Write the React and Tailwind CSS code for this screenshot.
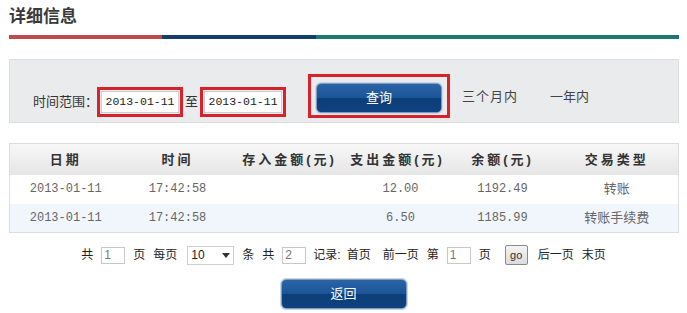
import React from 'react';

const font = { fontFamily: '"Liberation Sans", "Noto Sans CJK SC", sans-serif' };

const rows = [
  { date: '2013-01-11', time: '17:42:58', inAmt: '', outAmt: '12.00', balance: '1192.49', type: '转账' },
  { date: '2013-01-11', time: '17:42:58', inAmt: '', outAmt: '6.50', balance: '1185.99', type: '转账手续费' },
];

const BlueButton = ({ children, className = '' }) => (
  <button
    className={`h-[30px] w-[126px] rounded-[5px] border border-[#7f9cc2] bg-[linear-gradient(#2a64a6_0%,#1c5596_50%,#0c3d78_52%,#0f4280_100%)] text-[13px] text-white shadow-[0_0_0_1px_#c9d6e6] ${className}`}
  >
    {children}
  </button>
);

const DateBox = ({ value }) => (
  <div className="border-[3px] border-[#d9202b] p-[1px]">
    <div className="h-[22px] w-[78px] whitespace-nowrap border border-[#cfcfcf] bg-white text-center text-[11.5px] leading-[20px] text-[#222] font-['Liberation_Mono',monospace]">
      {value}
    </div>
  </div>
);

const SmallInput = ({ value, w = 'w-[24px]' }) => (
  <div className={`h-[17px] ${w} border border-[#c8c8c8] bg-white pl-[2px] text-[12px] leading-[15px] text-[#777]`}>{value}</div>
);

export default function App() {
  return (
    <div className="h-[313px] w-[687px] overflow-hidden bg-white px-[9px] pt-[6px] text-[#333]" style={font}>
      <h1 className="h-[22px] text-[17px] font-bold leading-[22px] text-[#3a3a3a]">详细信息</h1>
      <div className="mt-[7px] flex h-[4px] w-[670px]">
        <div className="w-[153px] bg-[#bf4a4d]" />
        <div className="w-[154px] bg-[#133f6b]" />
        <div className="flex-1 bg-[#1d7774]" />
      </div>

      <div className="mt-[20px] flex h-[64px] w-[670px] items-end border border-[#dcdcdc] bg-[#e9ebec] pb-[4px]">
        <div className="flex items-center pb-[1px]">
          <span className="ml-[23px] text-[13px] text-[#333]">时间范围：</span>
          <div className="ml-[-1px]"><DateBox value="2013-01-11" /></div>
          <span className="mx-[2px] text-[13px]">至</span>
          <DateBox value="2013-01-11" />
        </div>
        <div className="ml-[22px] border-[3px] border-[#d9202b] px-[5px] pt-[6px] pb-[2px]">
          <BlueButton>查询</BlueButton>
        </div>
        <span className="mb-[12px] ml-[12px] text-[13px] tracking-[1px] text-[#444]">三个月内</span>
        <span className="mb-[12px] ml-[32px] text-[13px] text-[#444]">一年内</span>
      </div>

      <table className="mt-[20px] w-[670px] border border-[#dcdcdc] text-center text-[12px]">
        <thead>
          <tr className="h-[31px] bg-[linear-gradient(#f7f7f7,#e6e6e6)] text-[13px] font-bold tracking-[3px] text-[#333]">
            <th className="w-[112px] font-bold">日期</th>
            <th className="w-[112px] font-bold">时间</th>
            <th className="w-[112px] font-bold">存入金额(元)</th>
            <th className="w-[104px] font-bold">支出金额(元)</th>
            <th className="w-[106px] font-bold">余额(元)</th>
            <th className="font-bold">交易类型</th>
          </tr>
        </thead>
        <tbody className="text-[#666]">
          {rows.map((r, i) => (
            <tr key={i} className={`h-[29px] ${i === 1 ? 'bg-[#f1f6fc]' : 'bg-white'}`}>
              <td className="font-['Liberation_Mono',monospace]">{r.date}</td>
              <td className="font-['Liberation_Mono',monospace]">{r.time}</td>
              <td>{r.inAmt}</td>
              <td className="pl-[6px] font-['Liberation_Mono',monospace]">{r.outAmt}</td>
              <td className="font-['Liberation_Mono',monospace]">{r.balance}</td>
              <td className="text-[13px]">{r.type}</td>
            </tr>
          ))}
        </tbody>
      </table>

      <div className="mt-[12px] flex items-center justify-center text-[12px] text-[#222]">
        <span>共</span>
        <span className="ml-[8px]"><SmallInput value="1" /></span>
        <span className="ml-[8px]">页</span>
        <span className="ml-[8px]">每页</span>
        <div className="ml-[10px] flex h-[19px] w-[47px] items-center justify-between border border-[#cfcfcf] bg-white px-[3px] text-[12px]">
          <span>10</span>
          <svg width="8" height="5" viewBox="0 0 8 5"><path d="M0 0h8L4 5z" fill="#333" /></svg>
        </div>
        <span className="ml-[8px]">条</span>
        <span className="ml-[8px]">共</span>
        <span className="ml-[8px]"><SmallInput value="2" /></span>
        <span className="ml-[7px]">记录:</span>
        <span className="ml-[6px]">首页</span>
        <span className="ml-[12px]">前一页</span>
        <span className="ml-[8px]">第</span>
        <span className="ml-[8px]"><SmallInput value="1" /></span>
        <span className="ml-[8px]">页</span>
        <button className="ml-[14px] h-[20px] w-[23px] rounded-[2px] border border-[#8a8a8a] bg-[linear-gradient(#f4f4f4,#dcdcdc)] text-[11px] leading-[16px] text-[#333]">go</button>
        <span className="ml-[10px]">后一页</span>
        <span className="ml-[8px]">末页</span>
      </div>

      <div className="mt-[14px] flex justify-center">
        <BlueButton>返回</BlueButton>
      </div>
    </div>
  );
}
